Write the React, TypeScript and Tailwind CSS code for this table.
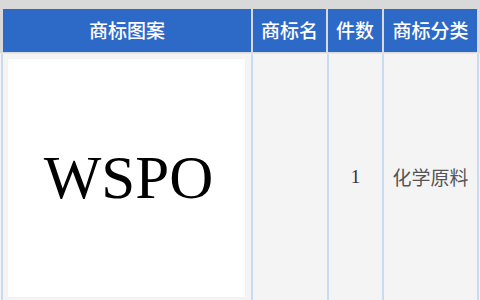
const cjk = "font-['Noto_Sans_CJK_SC',sans-serif]";

const headCell = `flex h-full items-center justify-center bg-[#2d69c7] text-[19px] font-medium text-white ${cjk}`;
const bodyCell = "flex h-full items-center justify-center border-l-2 border-[#c8dcf0]";

export default function App() {
  return (
    <div className="h-[300px] w-[480px] overflow-hidden bg-[#f4f4f4]">
      <div className="grid h-[53px] grid-cols-[248px_73px_54px_93px] gap-x-[2px] bg-[#d9d9d9] pb-px pl-[3px] pr-[3px] pt-[9px]">
        <div className={headCell}>商标图案</div>
        <div className={headCell}>商标名</div>
        <div className={headCell}>件数</div>
        <div className={headCell}>商标分类</div>
      </div>
      <div className="grid h-[248px] grid-cols-[250px_76px_55px_95px_4px] border-t border-[#e2ebf5] pl-px">
        <div className={`${bodyCell} pl-[5px] pr-[6px]`}>
          <div className="flex h-[238px] w-[238px] items-center justify-center bg-white pl-[4px] shadow-[0_0_1px_#e6e6e6]">
            <span className="font-['Liberation_Serif',serif] text-[61px] leading-none text-black">WSPO</span>
          </div>
        </div>
        <div className={bodyCell} />
        <div className={bodyCell}>
          <span className="font-['Liberation_Serif',serif] text-[19px] text-[#333]">1</span>
        </div>
        <div className={bodyCell}>
          <span className={`text-[19px] text-[#555] ${cjk}`}>化学原料</span>
        </div>
        <div className={bodyCell} />
      </div>
    </div>
  );
}
